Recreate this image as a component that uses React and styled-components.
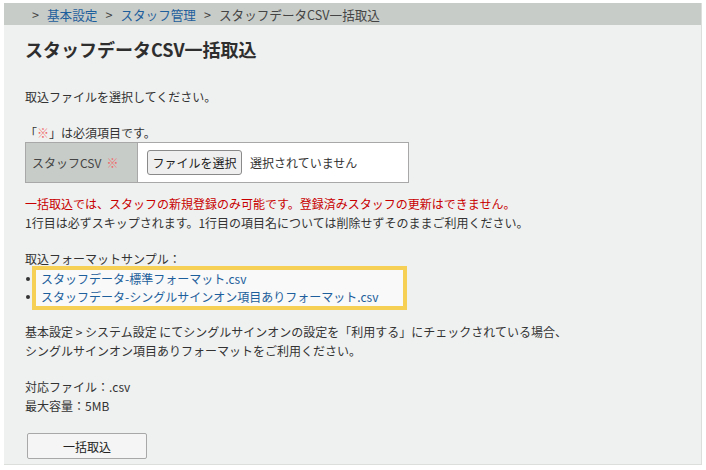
import React from 'react';
import styled, { createGlobalStyle } from 'styled-components';

////////////////////////////////////////////
///////////////[ S T Y L E S ]//////////////

const GlobalStyle = createGlobalStyle`
  html, body {
    margin: 0;
    background: #fff;
  }
  body {
    font-family: "Noto Sans CJK JP", "Noto Sans", "Liberation Sans", sans-serif;
    color: #333;
  }
`;

const Panel = styled.div`
  margin: 3px 4px 0 4px;
  width: 697px;
  background: #eff1f0;
  border-right: 1px solid #dcdedc;
  border-bottom: 1px solid #dcdedc;
  padding-bottom: 5px;
`;

const Breadcrumb = styled.div`
  height: 22px;
  background: #c7ccc8;
  display: flex;
  align-items: center;
  padding-left: 28px;
  font-size: 12.6px;
`;

const Sep = styled.span`
  color: #444;
  margin: 0 8px 0 0;
  padding-left: ${p => (p.first ? '0' : '8px')};
`;

const Crumb = styled.a`
  color: ${p => (p.current ? '#444' : '#1d5e9c')};
  text-decoration: none;
`;

const Body = styled.div`
  padding: 0 21px;
  font-size: 12px;
  line-height: 19px;
`;

const Title = styled.h1`
  margin: 11px 0 0 0;
  font-size: 18px;
  line-height: 26px;
  font-weight: bold;
  color: #2e2e2e;
`;

const Text = styled.p`
  margin: ${p => p.top || 0}px 0 0 0;
  color: ${p => (p.red ? '#c80000' : '#333')};
`;

const Mark = styled.span`
  color: #f06a6a;
`;

const FormTable = styled.div`
  display: flex;
  width: 382px;
  height: 39px;
  border: 1px solid #a8a8a8;
  background: #fff;
`;

const LabelCell = styled.div`
  width: 105px;
  padding-left: 6px;
  background: #c7ccc8;
  border-right: 1px solid #a8a8a8;
  display: flex;
  align-items: center;
  gap: 5px;
  color: #444;
`;

const ValueCell = styled.div`
  flex: 1;
  display: flex;
  align-items: center;
  padding-left: 9px;
  gap: 8px;
  color: #333;
`;

const FileButton = styled.button`
  height: 25px;
  width: 95px;
  padding: 0;
  font-family: inherit;
  font-size: 12px;
  color: #222;
  background: #efefef;
  border: 1px solid #8a8a8a;
  border-radius: 3px;
`;

const Highlight = styled.ul`
  list-style: none;
  margin: -2px 0 0 7px;
  padding: 0 0 0 5px;
  width: 362px;
  border: 4px solid #f6cf55;
  background: #f8f9f8;
`;

const Item = styled.li`
  position: relative;
  line-height: 18px;

  &::before {
    content: '';
    position: absolute;
    left: -15px;
    top: 7px;
    width: 4px;
    height: 4px;
    border-radius: 50%;
    background: #333;
  }
`;

const Link = styled.a`
  color: #1d5e9c;
  text-decoration: none;
`;

const SubmitButton = styled.button`
  display: block;
  margin: 18px 0 0 2px;
  width: 120px;
  height: 26px;
  font-family: inherit;
  font-size: 12px;
  color: #222;
  background: #f4f5f4;
  border: 1px solid #a8a8a8;
  border-radius: 2px;
`;

export default function App() {
  return (
    <>
      <GlobalStyle />
      <Panel>
        <Breadcrumb>
          <Sep first>&gt;</Sep>
          <Crumb>基本設定</Crumb>
          <Sep>&gt;</Sep>
          <Crumb>スタッフ管理</Crumb>
          <Sep>&gt;</Sep>
          <Crumb current>スタッフデータCSV一括取込</Crumb>
        </Breadcrumb>
        <Body>
          <Title>スタッフデータCSV一括取込</Title>
          <Text top={25}>取込ファイルを選択してください。</Text>
          <Text top={17}>「<Mark>※</Mark>」は必須項目です。</Text>
          <FormTable>
            <LabelCell>
              スタッフCSV <Mark>※</Mark>
            </LabelCell>
            <ValueCell>
              <FileButton>ファイルを選択</FileButton>
              選択されていません
            </ValueCell>
          </FormTable>
          <Text red top={11}>
            一括取込では、スタッフの新規登録のみ可能です。登録済みスタッフの更新はできません。
          </Text>
          <Text>1行目は必ずスキップされます。1行目の項目名については削除せずそのままご利用ください。</Text>
          <Text top={17}>取込フォーマットサンプル：</Text>
          <Highlight>
            <Item><Link>スタッフデータ-標準フォーマット.csv</Link></Item>
            <Item><Link>スタッフデータ-シングルサインオン項目ありフォーマット.csv</Link></Item>
          </Highlight>
          <Text top={12}>
            基本設定 &gt; システム設定 にてシングルサインオンの設定を「利用する」にチェックされている場合、
          </Text>
          <Text>シングルサインオン項目ありフォーマットをご利用ください。</Text>
          <Text top={17}>対応ファイル：.csv</Text>
          <Text>最大容量：5MB</Text>
          <SubmitButton>一括取込</SubmitButton>
        </Body>
      </Panel>
    </>
  );
}
